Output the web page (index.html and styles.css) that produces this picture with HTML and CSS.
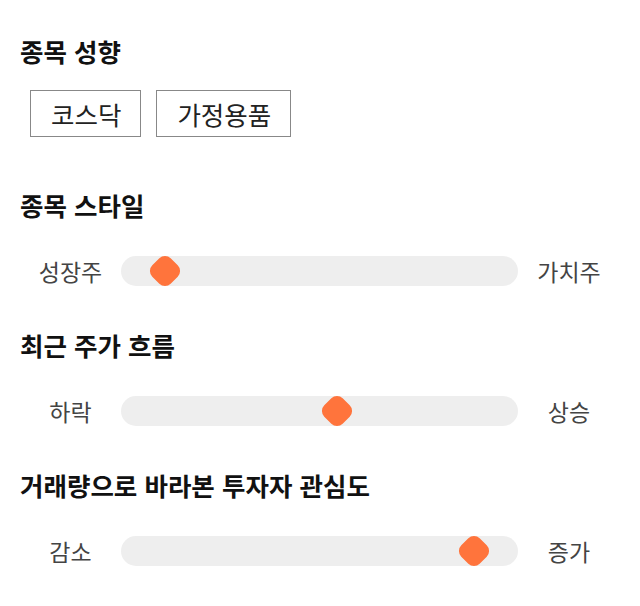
FILE: index.html
```html
<!DOCTYPE html>
<html lang="ko">
<head>
    <meta charset="UTF-8">
    <meta name="viewport" content="width=device-width, initial-scale=1.0">
    <title>종목 분석</title>
    <link rel="stylesheet" href="styles.css">
</head>
<body>

<div class="analysis">
    <section class="block">
        <h2 class="block-title">종목 성향</h2>
        <div class="tag-list">
            <span class="tag">코스닥</span>
            <span class="tag">가정용품</span>
        </div>
    </section>

    <section class="block">
        <h2 class="block-title">종목 스타일</h2>
        <div class="scale">
            <span class="scale-label left">성장주</span>
            <div class="track">
                <span class="thumb" style="left: 11%;"></span>
            </div>
            <span class="scale-label right">가치주</span>
        </div>
    </section>

    <section class="block">
        <h2 class="block-title">최근 주가 흐름</h2>
        <div class="scale">
            <span class="scale-label left">하락</span>
            <div class="track">
                <span class="thumb" style="left: 54.5%;"></span>
            </div>
            <span class="scale-label right">상승</span>
        </div>
    </section>

    <section class="block">
        <h2 class="block-title">거래량으로 바라본 투자자 관심도</h2>
        <div class="scale">
            <span class="scale-label left">감소</span>
            <div class="track">
                <span class="thumb" style="left: 89%;"></span>
            </div>
            <span class="scale-label right">증가</span>
        </div>
    </section>
</div>

</body>
</html>
```

FILE: styles.css
```css
body {
    margin: 0;
    padding: 0;
    background-color: #fff;
    color: #111;
    font-family: "Noto Sans CJK KR", "Noto Sans", sans-serif;
}

.analysis {
    padding: 30px 20px 0 20px;
}

.block-title {
    margin: 0;
    font-size: 25.5px;
    font-weight: bold;
    line-height: 42px;
    color: #111;
}

.tag-list {
    display: flex;
    gap: 15px;
    padding: 18px 0 47px 10px;
}

.tag {
    border: 1px solid #888;
    padding: 0 19px 0 20px;
    height: 45px;
    line-height: 45px;
    font-size: 25.5px;
    color: #222;
}

.scale {
    display: flex;
    align-items: center;
    padding: 30px 0 38px 0;
}

.scale-label {
    text-align: center;
    font-size: 23px;
    line-height: 30px;
    color: #444;
}

.scale-label.left {
    width: 101px;
}

.scale-label.right {
    width: 102px;
}

.track {
    position: relative;
    flex: 1;
    height: 30px;
    border-radius: 15px;
    background-color: #eeeeee;
}

.thumb {
    position: absolute;
    top: 2px;
    width: 26px;
    height: 26px;
    margin-left: -13px;
    border-radius: 8px;
    background-color: #ff743c;
    transform: rotate(45deg);
}
```
